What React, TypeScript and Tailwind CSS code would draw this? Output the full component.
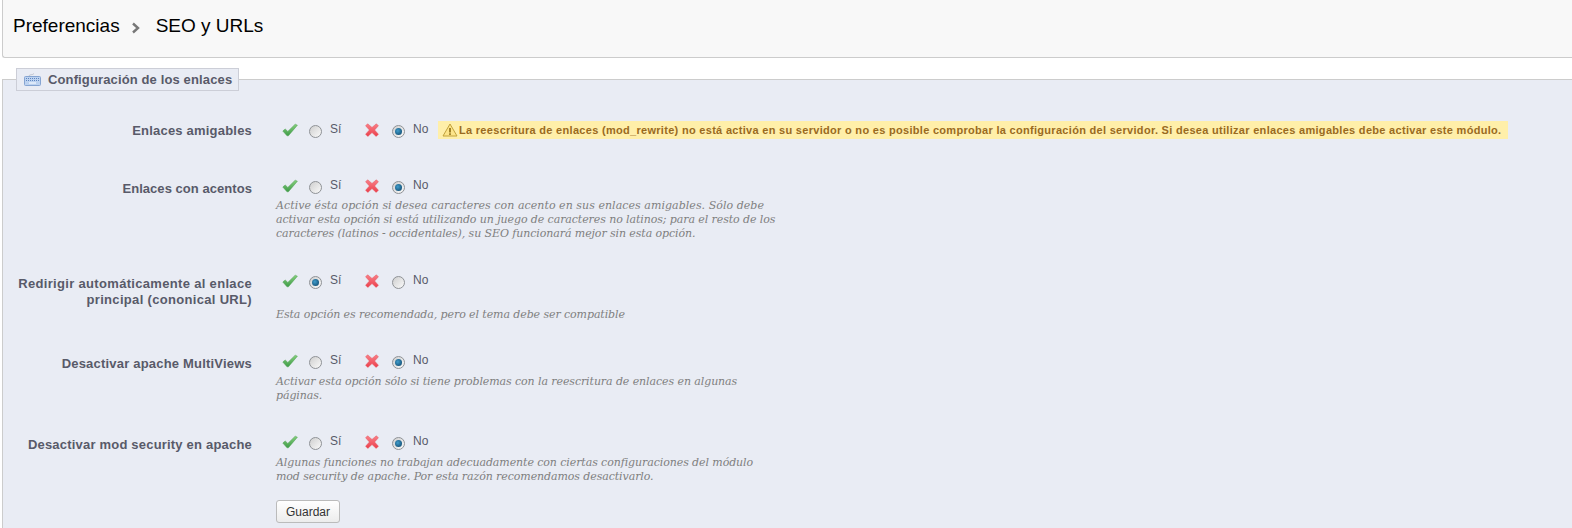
import React from "react";

function Check() {
  return (
    <svg width="16" height="14" viewBox="0 0 16 14" className="block">
      <defs>
        <linearGradient id="chk" x1="0" y1="0" x2="0" y2="1">
          <stop offset="0" stopColor="#86cf7c" />
          <stop offset="1" stopColor="#3f9c48" />
        </linearGradient>
      </defs>
      <path d="M0.8 8 L3.2 6 L5.8 8.4 L13.2 1.2 L15.4 2.2 L6.4 12.8 L5 12.8 Z" fill="url(#chk)" stroke="#4a9e4e" strokeWidth="0.5" strokeLinejoin="round" />
    </svg>
  );
}

function Cross() {
  return (
    <svg width="14" height="14" viewBox="0 0 14 14" className="block">
      <defs>
        <linearGradient id="crs" x1="0" y1="0" x2="0" y2="1">
          <stop offset="0" stopColor="#f98088" />
          <stop offset="1" stopColor="#ec3f4b" />
        </linearGradient>
      </defs>
      <path d="M2.6 0.8 L7 4.4 L11.4 0.8 L13.4 2.8 L9.6 7 L13.4 11.2 L11.2 13.4 L7 9.6 L2.8 13.4 L0.6 11.2 L4.4 7 L0.6 2.8 Z" fill="url(#crs)" stroke="#e4525b" strokeWidth="0.5" strokeLinejoin="round" />
    </svg>
  );
}

function Radio({ on }: { on: boolean }) {
  return (
    <span className="flex h-[13px] w-[13px] items-center justify-center rounded-full border border-[#8f9296] bg-gradient-to-br from-[#cfcfcf] to-[#fafafa]">
      {on && <span className="h-[7px] w-[7px] rounded-full bg-[radial-gradient(circle_at_40%_40%,#3f9ccb,#0b3f63)]" />}
    </span>
  );
}

function Toggle({ yes }: { yes: boolean }) {
  return (
    <div className="flex h-[20px] items-center text-[12px] text-[#585a69]">
      <span className="ml-[6px]"><Check /></span>
      <span className="ml-[11px] mt-[3px]"><Radio on={yes} /></span>
      <span className="ml-[8px] -mt-[2px] w-[35px]">Sí</span>
      <span><Cross /></span>
      <span className="ml-[13px] mt-[3px]"><Radio on={!yes} /></span>
      <span className="ml-[8px] -mt-[2px] w-[25px]">No</span>
    </div>
  );
}

function Desc({ children, gap }: { children: React.ReactNode; gap: string }) {
  return (
    <p className={`${gap} w-[540px] text-[11px] italic leading-[14px] tracking-[-0.09px] text-[#7f7f7f] [font-family:'DejaVu_Serif',serif]`}>
      {children}
    </p>
  );
}

function Row({
  label,
  yes,
  top,
  warn,
  children,
}: {
  label: React.ReactNode;
  yes: boolean;
  top: string;
  warn?: boolean;
  children?: React.ReactNode;
}) {
  return (
    <div className={`flex ${top}`}>
      <div className={`w-[249px] text-right text-[13px] font-bold leading-[16px] tracking-[0.2px] text-[#585a69] ${warn ? "pt-[3px]" : "pt-[5px]"}`}>
        {label}
      </div>
      <div className="ml-[24px]">
        <div className="flex items-center">
          <Toggle yes={yes} />
          {warn && (
            <div className="flex h-[18px] w-[1070px] items-center bg-[#ffefa9] pl-[4px] text-[11px] font-bold tracking-[0.3px] whitespace-nowrap text-[#9a6a1f]">
              <svg width="16" height="14" viewBox="0 0 16 14" className="mr-[1px] shrink-0">
                <path d="M8 1 L15 13 L1 13 Z" fill="#fde58a" stroke="#c2a23c" strokeWidth="1" strokeLinejoin="round" />
                <rect x="7.2" y="5" width="1.6" height="4.5" fill="#8a6a10" />
                <rect x="7.2" y="10.3" width="1.6" height="1.6" fill="#8a6a10" />
              </svg>
              La reescritura de enlaces (mod_rewrite) no está activa en su servidor o no es posible comprobar la configuración del servidor. Si desea utilizar enlaces amigables debe activar este módulo.
            </div>
          )}
        </div>
        {children}
      </div>
    </div>
  );
}

export default function App() {
  return (
    <div className="h-[528px] overflow-hidden bg-white [font-family:'Liberation_Sans',Arial,sans-serif]">
      <div className="ml-[2px] flex h-[58px] items-center rounded-bl-[3px] border-b border-l border-[#cccccc] bg-[#f8f8f8] pb-[4px] pl-[10px] text-[19px] text-black">
        <span>Preferencias</span>
        <svg width="10" height="12" viewBox="0 0 10 12" className="ml-[11px] mr-[15px] mt-[3px]">
          <path d="M2 1.5 L7 6 L2 10.5" fill="none" stroke="#777777" strokeWidth="2.4" />
        </svg>
        <span>SEO y URLs</span>
      </div>
      <div className="ml-[2px] mt-[21px] h-[449px] border-t border-l border-[#cccccc] bg-[#e9ecf4]">
        <div className="relative z-10 -mt-[12px] ml-[13px] flex h-[23px] w-[223px] items-center border border-[#ccced7] bg-[#e9ecf4] pl-[7px] text-[13px] font-bold tracking-[0.13px] text-[#585a69]">
          <svg width="17" height="13" viewBox="0 0 17 13" className="mr-[7px]">
            <path d="M5 3 C5 1 9 2.4 10 0.5" fill="none" stroke="#b8bcc8" strokeWidth="0.8" />
            <rect x="0.5" y="3.5" width="16" height="9" rx="1" fill="#bcd2f0" stroke="#86a5d2" />
            <path d="M2 5.5 H15 M2 7.5 H15" stroke="#5f86c0" strokeWidth="1" strokeDasharray="1 1" />
            <path d="M5 10 H12" stroke="#f4f8ff" strokeWidth="1.2" />
          </svg>
          Configuración de los enlaces
        </div>
        <Row label="Enlaces amigables" yes={false} top="mt-[29px]" warn />
        <Row label={<span className="tracking-[0.05px]">Enlaces con acentos</span>} yes={false} top="mt-[36px]">
          <Desc gap="mt-[3px]">
            <span className="tracking-[0.05px]">Active ésta opción si desea caracteres con acento en sus enlaces amigables. Sólo debe</span><br />
            activar esta opción si está utilizando un juego de caracteres no latinos; para el resto de los<br />
            caracteres (latinos - occidentales), su SEO funcionará mejor sin esta opción.
          </Desc>
        </Row>
        <Row
          label={<span className="tracking-[0.32px]">Redirigir automáticamente al enlace<br />principal (cononical URL)</span>}
          yes={true}
          top="mt-[30px]"
        >
          <Desc gap="mt-[17px]">Esta opción es recomendada, pero el tema debe ser compatible</Desc>
        </Row>
        <Row label="Desactivar apache MultiViews" yes={false} top="mt-[29px]">
          <Desc gap="mt-[4px]">
            Activar esta opción sólo si tiene problemas con la reescritura de enlaces en algunas<br />páginas.
          </Desc>
        </Row>
        <Row label="Desactivar mod security en apache" yes={false} top="mt-[29px]">
          <Desc gap="mt-[4px]">
            Algunas funciones no trabajan adecuadamente con ciertas configuraciones del módulo<br />
            mod security de apache. Por esta razón recomendamos desactivarlo.
          </Desc>
          <button className="mt-[16px] block h-[23px] w-[64px] rounded-[3px] border border-[#bbbbbb] bg-gradient-to-b from-white to-[#ececec] text-[12px] text-[#333333]">
            Guardar
          </button>
        </Row>
      </div>
    </div>
  );
}
